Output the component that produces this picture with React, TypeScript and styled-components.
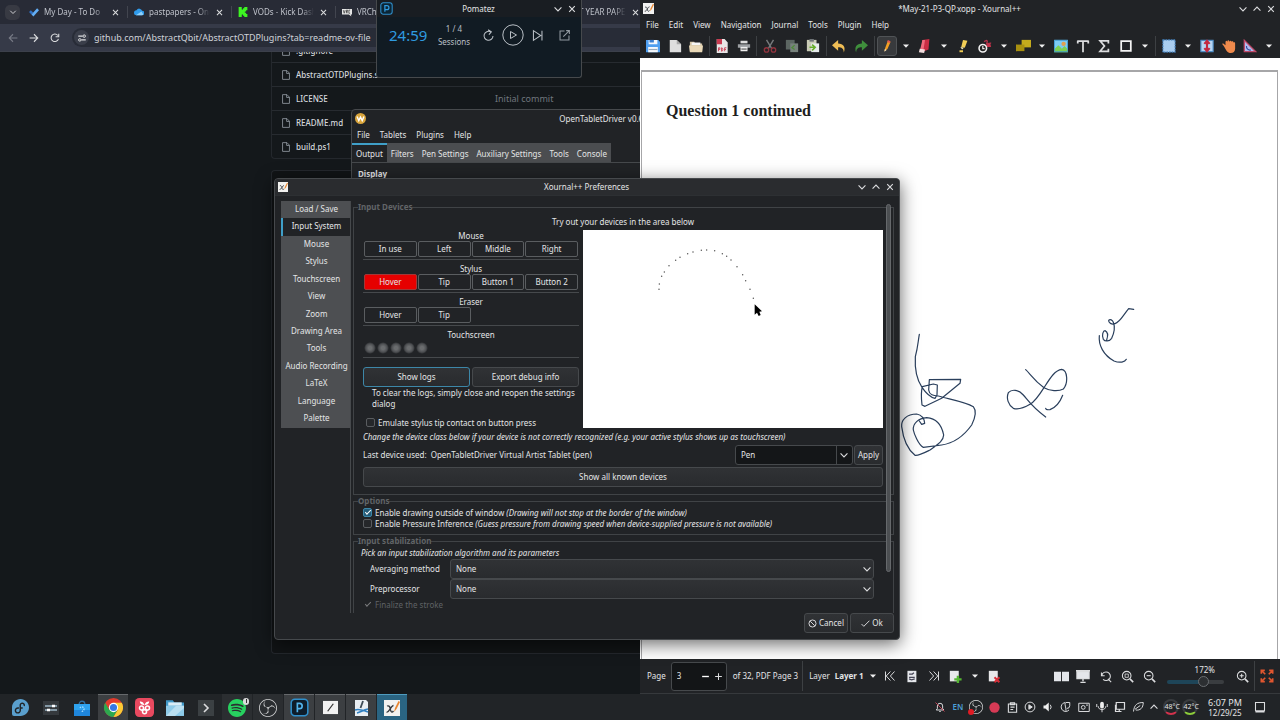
import React from "react";
import styled, { createGlobalStyle, css } from "styled-components";
import { SiFedora, SiSpotify, SiObsstudio } from "react-icons/si";

const Global = createGlobalStyle`
  *, *::before, *::after { box-sizing: border-box; }
  body { margin: 0; background: #14181b; }
  body, button, input, select, textarea {
    font-family: "Noto Sans", "Open Sans", sans-serif;
    font-size: 8px;
    line-height: 12px;
    color: #e4e5e6;
  }
  button { border: 0; padding: 0; margin: 0; background: none; }
  svg { display: block; flex: none; }
`;

/* ---------- shell ---------- */

const Desktop = styled.div`
  position: relative;
  display: flex;
  flex-direction: column;
  min-height: 100vh;
  overflow: hidden;
`;

const Workspace = styled.main`
  flex: 1;
  display: grid;
  grid-template-columns: minmax(0, 1fr) minmax(0, 1fr);
`;

const LeftHalf = styled.div`
  position: relative;
  display: flex;
  overflow: hidden;
`;

const Glyph = ({
  s = 14,
  box = 16,
  children,
}: {
  s?: number;
  box?: number;
  children: React.ReactNode;
}) => (
  <svg
    width={s}
    height={s}
    viewBox={`0 0 ${box} ${box}`}
    fill="none"
    stroke="#dcdddf"
    strokeWidth={1.3}
    aria-hidden
  >
    {children}
  </svg>
);

const ChevronDown = ({ s = 10 }: { s?: number }) => (
  <Glyph s={s}>
    <path d="M2.5 5.5 8 11l5.500-5.500" strokeWidth={1.8} />
  </Glyph>
);
const ChevronUp = ({ s = 10 }: { s?: number }) => (
  <Glyph s={s}>
    <path d="M2.5 10.500 8 5l5.5 5.5" strokeWidth={1.8} />
  </Glyph>
);
const Cross = ({ s = 10 }: { s?: number }) => (
  <Glyph s={s}>
    <path d="m3.500 3.500 9 9m0-9-9 9" strokeWidth={1.8} />
  </Glyph>
);
const JournalMark = ({ s = 10 }: { s?: number }) => (
  <Glyph s={s}>
    <path d="M0 0h16v16H0z" fill="#f2f2f0" stroke="none" />
    <path d="M3 6c3-1 3 2 3.500 4s1.500 3 3 1M9.500 5.500C7 5.500 5 13 2.500 12" stroke="#35393d" strokeWidth={1.3} />
    <path d="m10 12 1-4 3.500-7 1.500 1-3.500 7z" fill="#e8852e" stroke="none" />
  </Glyph>
);

/* ---------- browser ---------- */

const Browser = styled.section`
  flex: 1;
  min-width: 0;
  display: flex;
  flex-direction: column;
  background: #14181b;
`;

const TabStrip = styled.div`
  display: flex;
  align-items: center;
  height: 24px;
  padding-left: 5px;
  background: #282b36;
  overflow: hidden;
`;

const TabSearch = styled.button`
  display: grid;
  place-items: center;
  flex: none;
  width: 15px;
  height: 15px;
  margin-right: 3px;
  border-radius: 5px;
  background: #383a43;
`;

const Tab = styled.div`
  display: flex;
  align-items: center;
  flex: none;
  gap: 5px;
  width: 104px;
  height: 12px;
  padding: 0 7px 0 6px;
  color: #bfc2ca;
  & + & { border-left: 1px solid #42454f; }
`;

const TabTitle = styled.span`
  flex: 1;
  overflow: hidden;
  white-space: nowrap;
  mask-image: linear-gradient(90deg, #000 80%, transparent);
`;

const AddressBar = styled.div`
  display: flex;
  align-items: center;
  gap: 9px;
  height: 28px;
  padding-left: 7px;
  background: #363a48;
  border-bottom: 1px solid #3c404b;
`;

const NavButton = styled.button`
  display: grid;
  place-items: center;
  width: 12px;
  height: 12px;
`;

const UrlField = styled.label`
  flex: 1;
  display: flex;
  align-items: center;
  gap: 5px;
  height: 19px;
  margin-left: 2px;
  padding-left: 2px;
  border-radius: 10px 0 0 10px;
  background: #282c37;
`;

const SiteInfo = styled.span`
  display: grid;
  place-items: center;
  width: 15px;
  height: 15px;
  border-radius: 8px;
  background: #3a3e4a;
`;

const UrlInput = styled.input`
  flex: 1;
  min-width: 0;
  padding: 0;
  border: 0;
  background: none;
  font-size: 9px;
  color: #cfd2d8;
  outline: none;
`;

const PageBody = styled.div`
  flex: 1;
  display: flex;
  flex-direction: column;
  gap: 11px;
  padding: 0 0 40px 271px;
  overflow: hidden;
`;

/* The listing is scrolled so its first row is mostly out of view. */
const FileTable = styled.table`
  width: 100%;
  margin-top: -14px;
  border: 1px solid #24282d;
  border-width: 0 0 1px 1px;
  border-radius: 0 0 0 4px;
  border-collapse: separate;
  border-spacing: 0;
`;

const FileCell = styled.td<{ $muted?: boolean }>`
  height: 24px;
  padding: 0 0 0 ${(p) => (p.$muted ? 0 : 9)}px;
  width: ${(p) => (p.$muted ? "auto" : "223px")};
  border-top: 1px solid #272b30;
  font-weight: ${(p) => (p.$muted ? 400 : 500)};
  color: ${(p) => (p.$muted ? "#70767d" : "#d3d7db")};
  font-size: ${(p) => (p.$muted ? 9 : 8)}px;
  white-space: nowrap;
`;

const FileName = styled.div`
  display: flex;
  align-items: center;
  gap: 5px;
`;

const ReadmeBox = styled.div`
  flex: 1;
  border: 1px solid #24282d;
  border-right: 0;
  border-radius: 4px 0 0 4px;
  background: #111416;
`;

const FileGlyph = () => (
  <Glyph s={10}>
    <path d="M2.500 1h7l4 4v10h-11zM9 1v4.500h4.500" stroke="#8d949b" strokeWidth={1.4} />
  </Glyph>
);

const FavTodo = () => (
  <Glyph s={10}>
    <path d="m0 8 3-3 4 4-3 3z" fill="#2f6fc4" stroke="none" />
    <path d="m4 12 9-10 3 3L7 15z" fill="#62adf5" stroke="none" />
  </Glyph>
);
const FavCloud = () => (
  <Glyph s={10}>
    <path d="M4 13a4 4 0 0 1 0-8 5 5 0 0 1 9 1 3.500 3.500 0 0 1 0 7z" fill="#2f9bec" stroke="none" />
    <path d="M3 13 12 7l3 5-2 1z" fill="#8fd0fa" stroke="none" />
  </Glyph>
);
const FavKick = () => (
  <Glyph s={10}>
    <path d="M1 0h5v4h2V2h2V0h5v5h-2v2h-2v2h2v2h2v5h-5v-2H8v-2H6v4H1z" fill="#3df522" stroke="none" />
  </Glyph>
);
const FavChat = () => (
  <Glyph s={10}>
    <path d="M0 3h16v9h-2l1 3-4-3H0z" fill="#e6e6e6" stroke="none" />
    <path d="m2 5 1.500 5L5 5m2 5V5h2v2H7l2 3m4-5h-2v5h2" stroke="#333" strokeWidth={1.100} />
  </Glyph>
);

const files = [".gitignore", "AbstractOTDPlugins.sln", "LICENSE", "README.md", "build.ps1"];
const tabs: { title: string; icon: React.ReactNode }[] = [
  { title: "My Day - To Do", icon: <FavTodo /> },
  { title: "pastpapers - OneDrive", icon: <FavCloud /> },
  { title: "VODs - Kick Dashboard", icon: <FavKick /> },
  { title: "VRChat", icon: <FavChat /> },
  { title: "", icon: <FavCloud /> },
  { title: "PAST YEAR PAPERS", icon: <FavCloud /> },
];

const BrowserWindow = () => (
  <Browser>
    <TabStrip>
      <TabSearch aria-label="Search tabs"><ChevronDown s={8} /></TabSearch>
      {tabs.map((t) => (
        <Tab key={t.title}>
          {t.icon}
          <TabTitle>{t.title}</TabTitle>
          <Cross s={9} />
        </Tab>
      ))}
    </TabStrip>
    <AddressBar>
      <NavButton aria-label="Back">
        <Glyph s={10}><path d="M15 8H2m6-6L2 8l6 6" stroke="#777b85" strokeWidth={1.700} /></Glyph>
      </NavButton>
      <NavButton aria-label="Forward">
        <Glyph s={10}><path d="M1 8h13M8 2l6 6-6 6" strokeWidth={1.700} /></Glyph>
      </NavButton>
      <NavButton aria-label="Reload">
        <Glyph s={10}><path d="M13.500 9.500A6 6 0 1 1 12.500 4M14 1v5H9" strokeWidth={1.700} /></Glyph>
      </NavButton>
      <UrlField>
        <SiteInfo>
          <Glyph s={10}>
            <path d="M2 5h7M7 11h7" strokeWidth={1.800} />
            <circle cx="11.500" cy="5" r="2" strokeWidth={1.600} />
            <circle cx="4.500" cy="11" r="2" strokeWidth={1.600} />
          </Glyph>
        </SiteInfo>
        <UrlInput aria-label="Address" defaultValue="github.com/AbstractQbit/AbstractOTDPlugins?tab=readme-ov-file" />
      </UrlField>
    </AddressBar>
    <PageBody>
      <FileTable>
        <tbody>
          {files.map((f) => (
            <tr key={f}>
              <FileCell><FileName><FileGlyph />{f}</FileName></FileCell>
              <FileCell $muted>{f === "LICENSE" ? "Initial commit" : ""}</FileCell>
            </tr>
          ))}
        </tbody>
      </FileTable>
      <ReadmeBox />
    </PageBody>
  </Browser>
);

/* ---------- floating windows ---------- */

const windowFrame = css`
  position: absolute;
  display: flex;
  flex-direction: column;
  border: 1px solid #46494c;
  background: #212326;
`;

const TitleBar = styled.header`
  display: grid;
  grid-template-columns: 1fr auto 1fr;
  align-items: center;
  flex: none;
  height: 17px;
  padding: 0 4px 0 3px;
`;

const WindowControls = styled.div`
  display: flex;
  justify-content: flex-end;
  gap: 4px;
`;

const ControlButton = styled.button`
  display: grid;
  place-items: center;
  width: 10px;
  height: 12px;
`;

const MenuBar = styled.nav<{ $pad: number }>`
  display: flex;
  align-items: center;
  gap: 10px;
  height: 16px;
  padding-left: ${(p) => p.$pad}px;
`;

const TabletWindow = styled.section`
  ${windowFrame}
  left: 351px;
  top: 109px;
  width: 515px;
  height: 480px;
  border-radius: 4px 4px 0 0;
`;

const TabletTabs = styled.div`
  display: flex;
  height: 20px;
  border-bottom: 1px solid #46494c;
`;

const TabletTab = styled.button<{ $active?: boolean }>`
  padding: 0 4px;
  border-top: 2px solid ${(p) => (p.$active ? "#3f9fc8" : "#4b4d50")};
  background: ${(p) => (p.$active ? "#212326" : "#4b4d50")};
`;

const SectionTitle = styled.h2`
  margin: 5px 6px;
  font-size: 8px;
  line-height: 12px;
`;

const TabletDriver = () => (
  <TabletWindow>
    <TitleBar>
      <Glyph s={11}>
        <circle cx="8" cy="8" r="8" fill="#d9a53c" stroke="none" />
        <path d="m3 5 2.500 6L8 6l2.500 5L13 5" stroke="#fff" strokeWidth={2} />
      </Glyph>
      <span>OpenTabletDriver v0.6.6.2</span>
      <span />
    </TitleBar>
    <MenuBar $pad={5}>
      {["File", "Tablets", "Plugins", "Help"].map((m) => <button key={m}>{m}</button>)}
    </MenuBar>
    <TabletTabs>
      {["Output", "Filters", "Pen Settings", "Auxiliary Settings", "Tools", "Console"].map((t, i) => (
        <TabletTab key={t} $active={i === 0}>{t}</TabletTab>
      ))}
    </TabletTabs>
    <SectionTitle>Display</SectionTitle>
  </TabletWindow>
);

const TimerWindow = styled.section`
  ${windowFrame}
  left: 376px;
  top: 0;
  width: 206px;
  height: 78px;
  border-top: 0;
  border-radius: 0 0 3px 3px;
  background: #111b23;
  ${TitleBar} { background: #191d22; }
`;

const TimerRow = styled.div`
  display: flex;
  align-items: center;
  height: 36px;
  padding: 0 10px 0 12px;
`;

const TimeLeft = styled.time`
  width: 48px;
  font-size: 15px;
  line-height: 20px;
  color: #2f9be0;
`;

const Sessions = styled.div`
  width: 34px;
  margin-right: 11px;
  text-align: center;
  line-height: 13px;
  color: #b9bfc5;
`;

const TimerButtons = styled.div`
  flex: 1;
  display: flex;
  align-items: center;
  gap: 7px;
  button:last-child { margin-left: auto; }
`;

const Pomatez = () => (
  <TimerWindow>
    <TitleBar>
      <Glyph s={13}>
        <rect x="1" y="1" width="14" height="14" rx="3" fill="#0b2535" stroke="#2f8fcb" />
        <path d="M6 12V4.500h2.500a2 2 0 0 1 0 5H6" stroke="#2f9be0" strokeWidth={1.500} />
      </Glyph>
      <span>Pomatez</span>
      <WindowControls>
        <ControlButton aria-label="Minimize"><ChevronDown /></ControlButton>
        <ControlButton aria-label="Close"><Cross /></ControlButton>
      </WindowControls>
    </TitleBar>
    <TimerRow>
      <TimeLeft>24:59</TimeLeft>
      <Sessions>1 / 4<br />Sessions</Sessions>
      <TimerButtons>
        <button aria-label="Reset">
          <Glyph s={13}><path d="M13.500 8.500a5.500 5.500 0 1 1-3-5M7.500 1l4 2.500L8.500 7" stroke="#b9bfc5" /></Glyph>
        </button>
        <button aria-label="Start">
          <Glyph s={22} box={22}>
            <circle cx="11" cy="11" r="10.200" stroke="#b9bfc5" strokeWidth={1} />
            <path d="M8.500 7.500v7l6-3.500z" stroke="#b9bfc5" strokeWidth={1} />
          </Glyph>
        </button>
        <button aria-label="Skip">
          <Glyph s={13}><path d="M3 2v12l9-6zM13.500 2v12" stroke="#b9bfc5" /></Glyph>
        </button>
        <button aria-label="Compact mode">
          <Glyph s={13}><path d="M8 2.500H2.500v11h11V8M6.500 9.500 14 2m-4 0h4v4" stroke="#929aa1" /></Glyph>
        </button>
      </TimerButtons>
    </TimerRow>
  </TimerWindow>
);

/* ---------- Xournal++ main window ---------- */

const Journal = styled.section`
  display: flex;
  flex-direction: column;
  min-width: 0;
  background: #212326;
`;

const Divider = styled.span<{ $h?: number }>`
  flex: none;
  width: 1px;
  height: ${(p) => p.$h ?? 20}px;
  margin: 0 1px;
  background: #3d4043;
`;

const ToolBar = styled.div`
  display: flex;
  align-items: center;
  justify-content: space-between;
  height: 25px;
  padding: 0 3px;
`;

const Tool = styled.button<{ $on?: boolean }>`
  display: grid;
  place-items: center;
  width: 20px;
  height: 20px;
  border-radius: 3px;
  border: 1px solid ${(p) => (p.$on ? "#505356" : "transparent")};
  background: ${(p) => (p.$on ? "#383a3d" : "none")};
`;

const CaretButton = styled.button<{ $w?: number }>`
  display: grid;
  place-items: center;
  width: ${(p) => p.$w ?? 15}px;
  height: 20px;
`;

const Caret = () => (
  <Glyph s={6} box={6}><path d="M0 1.500h6L3 4.800z" fill="#f0f0f0" stroke="none" /></Glyph>
);

const toolIcons: Record<string, React.ReactNode> = {
  Save: <Glyph><path d="M0 1h14l2 2v12H0z" fill="#4f9ff0" stroke="none" /><path d="M3 1h10v5H3zM2.500 9h11v6h-11z" fill="#f4f8fc" stroke="none" /><path d="M4 1v3h5V1z" fill="#3b7fd0" stroke="none" /><path d="M3 12h10" stroke="#9ab" /></Glyph>,
  New: <Glyph><path d="M2 1h8l5 5v9H2z" fill="#dedede" stroke="none" /><path d="M10 1v5h5z" fill="#a8a8a8" stroke="none" /></Glyph>,
  Open: <Glyph><path d="M1 3h5l1 2h8v9H1z" fill="#d5c4a4" stroke="none" /><path d="M3 4h10v3H3z" fill="#f5f5f5" stroke="none" /><path d="M0 7.500h16L15 15H1z" fill="#ead9b8" stroke="none" /></Glyph>,
  "Export PDF": <Glyph><path d="M2 0h9l3.500 4v12H2z" fill="#e9e6e6" stroke="none" /><path d="M2 0h6v6H2z" fill="#c93a50" stroke="none" /><path d="M4 14v-4h1.500v2H4m3.500-2v4c2 0 2-4 0-4m3.500 4v-4h2m-2 2h1.500" stroke="#c93a50" strokeWidth={1} /></Glyph>,
  Print: <Glyph><path d="M4 2h8v3H4z" fill="#ddd" stroke="none" /><path d="M1 6h14v4H1z" fill="#9da0a3" stroke="none" /><path d="M4 9h8v5H4z" fill="#f0f0f0" stroke="none" /><path d="M5 11.500h6" stroke="#555" /></Glyph>,
  Cut: <Glyph><path d="m4 1 6 10M12 1 6 11" stroke="#777a7d" strokeWidth={1.600} /><circle cx="4" cy="12.500" r="2.500" stroke="#92333e" strokeWidth={1.500} /><circle cx="12" cy="12.500" r="2.500" stroke="#92333e" strokeWidth={1.500} /></Glyph>,
  Copy: <Glyph><path d="M1 1h10v11H1z" fill="#5c6662" stroke="none" /><path d="M6 5h9v10H6z" fill="#77827c" stroke="none" /><path d="m11 7-3 3 3 2" stroke="#4f8a3a" strokeWidth={1.600} /></Glyph>,
  Paste: <Glyph><path d="M1 1h11v13H1z" fill="#c9cbb6" stroke="none" /><path d="M4 0h5v3H4z" fill="#6f7478" stroke="none" /><path d="M6 5h9v10H6z" fill="#e7ecec" stroke="none" /><path d="M4 9.500h5m-2-3 3.500 3L7 13" stroke="#67ad2c" strokeWidth={1.800} /></Glyph>,
  Undo: <Glyph><path d="M7 1v4c6 0 9 4 6.500 10.500C13.500 11 11 9.500 7 9.500v4L0 7z" fill="#efbd55" stroke="none" /></Glyph>,
  Redo: <Glyph><path d="M9 1v4C3 5 0 9 2.500 15.500 2.500 11 5 9.500 9 9.500v4L16 7z" fill="#3f8f3c" stroke="none" /></Glyph>,
  Pen: <Glyph><path d="m5 14 1-4 3-8 3 1.500-3.500 8z" fill="#f4a024" stroke="none" /><path d="m9 1 3 1.500-.8 2.200-3-1.400z" fill="#e2574c" stroke="none" /><path d="m5 14.500.5-3 2 1z" fill="#f5e3c0" stroke="none" /></Glyph>,
  Eraser: <Glyph><path d="m5 1 8-1-1 12-8 3z" fill="#c92d44" stroke="none" /><path d="m5 1 3 0-2 13-4 0z" fill="#ef6a7c" stroke="none" /><path d="m2 11 6 1-1 4-6-1z" fill="#f4dfe0" stroke="none" /></Glyph>,
  Highlighter: <Glyph><path d="m8 1 5 1-3 8-4-1z" fill="#f3cf56" stroke="none" /><path d="m5 9 4 1-2 2z" fill="#fff3c2" stroke="none" /><path d="M4 14h4" stroke="#f3cf56" strokeWidth={2.200} /></Glyph>,
  "Select region": <Glyph><path d="M7 3c4-3 4 0 3 2s3-1 5 0" stroke="#b4334a" strokeWidth={1.500} /><path d="m9 9 6 0-1-4-4 1z" fill="#c2324a" stroke="none" /><circle cx="5.500" cy="10.500" r="4.300" fill="#222" stroke="#f2f2f2" strokeWidth={1.800} /><path d="M5.500 8v3h2" stroke="#f2f2f2" /></Glyph>,
  Shapes: <Glyph s={15}><path d="M6 2h10v8H6z" fill="#c4ab1d" stroke="none" /><path d="M0 7h9v7H0z" fill="#a89010" stroke="none" /></Glyph>,
  Image: <Glyph><path d="M0 1h16v14H0z" fill="#7ecbf2" stroke="none" /><path d="m0 12 5-5 4 4 3-3 4 4v3H0z" fill="#7ed052" stroke="none" /><circle cx="11" cy="5.500" r="2.500" fill="#e0a050" stroke="none" /><path d="M.5 1.500h15v13H.5z" stroke="#3b97cf" strokeWidth={1} /></Glyph>,
  Text: <Glyph><path d="M1.500 2.500h13M8 2.500V15M2 2v3m12-3v3" strokeWidth={2} /></Glyph>,
  Math: <Glyph><path d="M13 5V2H3.500l5 6-5 6H13v-3" strokeWidth={2} /></Glyph>,
  Rectangle: <Glyph><path d="M2.500 2.500h11v11h-11z" strokeWidth={2} stroke="#f4f4f4" /></Glyph>,
  "Select rectangle": <Glyph><path d="M1 1h14v14H1z" fill="#a9cdf0" stroke="#3f7db8" strokeDasharray="2 1" /></Glyph>,
  "Vertical space": <Glyph><path d="M1 1.500h14v13H1z" fill="#b6d5f3" stroke="#4f8cc4" /><path d="M8 2v12M5 5.500 8 2l3 3.500M5 10.500 8 14l3-3.500" stroke="#c32941" strokeWidth={2.400} /></Glyph>,
  Hand: <Glyph><path d="M2 8 0 5.500 1.500 5 4 7V3c.5-1.500 1.500-1.500 2 0 .5-2 2-2 2.500 0C9 1.500 10.500 1.500 11 3c1-1 2-.5 2 1 1.500-.5 2 0 2 1.500V11c0 3-2 5-5 5-4 0-5-3-8-8z" fill="#ef8a4c" stroke="none" /></Glyph>,
  "Set square": <Glyph><path d="M1.500 1.500v13h13z" fill="#aebdf0" stroke="#c04a68" strokeWidth={1.500} /><path d="M4 8a4 4 0 0 0 5 4.500" stroke="#364a9a" /></Glyph>,
};

const toolLayout = [
  "Save", "New", "Open", "|", "Export PDF", "Print", "|", "Cut", "Copy", "Paste", "|", "Undo", "Redo", "|",
  "Pen", "v", "Eraser", "v", "Highlighter", "Select region", "v", "Shapes", "v", "Image", "Text", "Math",
  "Rectangle", "v", "|", "Select rectangle", "v", "Vertical space", "Hand", "Set square", "v",
];

const Canvas = styled.div`
  flex: 1;
  display: flex;
  flex-direction: column;
  background: #fff;
`;

const PageGap = styled.div`
  height: 12px;
  background: #fff;
`;

const Sheet = styled.article`
  position: relative;
  flex: 1;
  margin: 0 2px 0 1px;
  padding: 29px 24px;
  border: solid #a6a6a8;
  border-width: 2px 1px 0 1px;
  background: #fff;
`;

const Heading = styled.h1`
  margin: 0;
  font-family: "Liberation Serif", "Times New Roman", serif;
  font-size: 16px;
  line-height: 20px;
  color: #1e1e20;
`;

const Ink = styled.svg`
  position: absolute;
  left: 248px;
  top: 218px;
`;

const StatusBar = styled.footer`
  display: flex;
  align-items: center;
  height: 35px;
  padding: 0 2px 0 7px;
  border-bottom: 1px solid #36393c;
`;

const PageSpin = styled.div`
  display: flex;
  align-items: center;
  width: 56px;
  height: 29px;
  margin: 0 6px 0 5px;
  padding: 0 1px 0 5px;
  border: 1px solid #46494c;
  border-radius: 3px;
  background: #131517;
`;

const SpinInput = styled.input`
  flex: 1;
  min-width: 0;
  padding: 0;
  border: 0;
  background: none;
`;

const SpinButton = styled.button`
  display: grid;
  place-items: center;
  width: 13px;
  height: 20px;
`;

const LayerButton = styled.button`
  display: flex;
  align-items: center;
  gap: 6px;
  margin: 0 3px 0 5px;
  font-weight: 700;
`;

const StatusButton = styled.button`
  display: grid;
  place-items: center;
  flex: none;
  width: 22px;
  height: 22px;
`;

const StatusLabel = styled.label`
  white-space: nowrap;
`;

const PageCount = styled.span`
  margin-right: 3px;
  white-space: nowrap;
`;

const LayerLabel = styled.span`
  margin-left: 5px;
`;

const Filler = styled.span`
  flex: 1;
`;

const ZoomControl = styled.label`
  display: flex;
  flex-direction: column;
  width: 71px;
  padding: 0 7px;
  text-align: right;
  span { padding-right: 9px; }
`;

const ZoomRange = styled.input`
  width: 57px;
  height: 13px;
  margin: 0;
  appearance: none;
  background: none;
  &::-webkit-slider-runnable-track {
    height: 4px;
    border-radius: 2px;
    background: linear-gradient(90deg, #1e4558 60%, #3a3d40 60%);
  }
  &::-webkit-slider-thumb {
    appearance: none;
    width: 11px;
    height: 11px;
    margin-top: -4px;
    border: 1px solid #6a6e72;
    border-radius: 50%;
    background: #2c2f32;
  }
`;

const Lens = ({ children }: { children?: React.ReactNode }) => (
  <Glyph s={13}><circle cx="7" cy="7" r="5.300" /><path d="m11 11 4 4" strokeWidth={2} />{children}</Glyph>
);

const JournalWindow = () => (
  <Journal>
    <TitleBar>
      <JournalMark s={11} />
      <span>*May-21-P3-QP.xopp - Xournal++</span>
      <WindowControls>
        <ControlButton aria-label="Minimize"><ChevronDown /></ControlButton>
        <ControlButton aria-label="Maximize"><ChevronUp /></ControlButton>
        <ControlButton aria-label="Close"><Cross /></ControlButton>
      </WindowControls>
    </TitleBar>
    <MenuBar $pad={6}>
      {["File", "Edit", "View", "Navigation", "Journal", "Tools", "Plugin", "Help"].map((m) => (
        <button key={m}>{m}</button>
      ))}
    </MenuBar>
    <ToolBar>
      {toolLayout.map((t, i) =>
        t === "|" ? <Divider key={i} /> :
        t === "v" ? <CaretButton key={i} aria-label="More"><Caret /></CaretButton> :
        <Tool key={i} aria-label={t} $on={t === "Pen"}>{toolIcons[t]}</Tool>
      )}
    </ToolBar>
    <Canvas>
      <PageGap />
      <Sheet>
        <Heading>Question 1 continued</Heading>
        <Ink width="270" height="180" viewBox="0 0 810 540" fill="none" stroke="#2a3f5c" strokeWidth="3.600" strokeLinecap="round" strokeLinejoin="round">
          <path d="M88 133C84 155 84 170 76 200c-2 35 2 65 20 92 15 22 26 30 39 33l6-10 1-30-12-3-33 8c-4 15-4 30-1 55l9 4 50-24 55-45 2-12-94 1-2 31c2 15 14 17 29 18 35 10 80 17 105 32 12 15 5 35-5 55-25 35-55 55-90 60l-55 7c-15-7-28-42-30-52-2-20 15-35 40-37 30 2 45 22 51 52-1 20-21 30-41 45-20 10-35 18-45 16-20-16-35-46-40-86-2-20 15-38 45-38 15 3 23 13 24 28l-9 3-7-10" />
          <path d="M407 239c13 11 23 31 55 54 18 10 43 12 58 4 15-17 13-57-5-59-20 2-35 27-53 55-17 27-27 42-42 50-20 12-35 17-50 12-15-10-22-30-15-47 10-11 30-10 45 7 15 17 25 35 67 66" />
          <path d="M467 355q1 5 13 4 25-9 38-43" />
          <path d="m731 58-15-2c-16 19-26 41-41 45-10 4-20-3-19-10 4-5 12-1 14 6 5 13 2 33-5 48-7 10-20 10-25 3-6-13 0-26 5-26 7 3 10 13 5 28" />
          <path d="M628 137c-3 28 12 58 44 76 18 7 33 3 37-5" />
        </Ink>
      </Sheet>
    </Canvas>
    <StatusBar>
      <StatusLabel htmlFor="page-no">Page</StatusLabel>
      <PageSpin>
        <SpinInput id="page-no" defaultValue="3" />
        <SpinButton aria-label="Previous page"><Glyph s={9}><path d="M2 8h12" strokeWidth={2.400} stroke="#fff" /></Glyph></SpinButton>
        <SpinButton aria-label="Next page"><Glyph s={9}><path d="M2 8h12M8 2v12" strokeWidth={1.800} /></Glyph></SpinButton>
      </PageSpin>
      <PageCount>of 32, PDF Page 3</PageCount>
      <Divider $h={30} />
      <LayerLabel>Layer</LayerLabel>
      <LayerButton>Layer 1 <Caret /></LayerButton>
      <StatusButton aria-label="First page"><Glyph s={12}><path d="M2 2v12M8.500 2l-5.500 6 5.500 6M14 2 8.500 8l5.500 6" /></Glyph></StatusButton>
      <StatusButton aria-label="Go to page"><Glyph s={13}><path d="M3 1h11v14H3z" fill="#e4e6ea" stroke="none" /><path d="M5 5h4l2-1.500M5 9h7M5 11l3 1 4-1" stroke="#445" strokeWidth={1.500} /></Glyph></StatusButton>
      <StatusButton aria-label="Last page"><Glyph s={12}><path d="M14 2v12M7.500 2l5.500 6-5.500 6M2 2l5.500 6L2 14" /></Glyph></StatusButton>
      <StatusButton aria-label="Add page"><Glyph s={13}><path d="M1 1h11v13H1z" fill="#e8e8ea" stroke="none" /><path d="M11 7v9M6.500 11.500h9" stroke="#55b533" strokeWidth={3} /></Glyph></StatusButton>
      <CaretButton $w={17} aria-label="Page templates"><Caret /></CaretButton>
      <StatusButton aria-label="Delete page"><Glyph s={13}><path d="M1 1h11v13H1z" fill="#e8e8ea" stroke="none" /><path d="m8 9 6 6m0-6-6 6" stroke="#d62c36" strokeWidth={2.400} /></Glyph></StatusButton>
      <Filler />
      <StatusButton aria-label="Paired pages"><Glyph s={15}><path d="M0 3h7.500v10H0zM8.500 3H16v10H8.500z" fill="#e4e6ea" stroke="none" /></Glyph></StatusButton>
      <StatusButton aria-label="Presentation"><Glyph s={14}><path d="M1 3h14v8H1z" fill="#e4e6ea" /><path d="M0 2h16M8 11v3m-3 1.500h6" strokeWidth={1.600} /></Glyph></StatusButton>
      <StatusButton aria-label="Zoom 100%"><Glyph s={13}><path d="M3 3v4h4M3.500 6.500A5.300 5.300 0 1 1 5 11.500M11 11l4 4" /></Glyph></StatusButton>
      <StatusButton aria-label="Zoom fit"><Lens><path d="M5 5h4v4H5z" strokeWidth={1} /></Lens></StatusButton>
      <StatusButton aria-label="Zoom out"><Lens><path d="M4.500 7h5" /></Lens></StatusButton>
      <ZoomControl>
        <span>172%</span>
        <ZoomRange type="range" min={0} max={100} defaultValue={67} />
      </ZoomControl>
      <StatusButton aria-label="Zoom in"><Lens><path d="M4.500 7h5M7 4.500v5" /></Lens></StatusButton>
      <Divider $h={30} />
      <StatusButton aria-label="Fullscreen"><Glyph s={14}><path d="M1.500 5.500v-4h4m5 0h4v4m0 5v4h-4m-5 0h-4v-4M2 2l4 4m8-4-4 4M2 14l4-4m8 4-4-4" stroke="#e0562f" strokeWidth={1.900} /></Glyph></StatusButton>
    </StatusBar>
  </Journal>
);

/* ---------- preferences dialog ---------- */

const Dialog = styled.section`
  ${windowFrame}
  left: calc(50% - 366px);
  top: 178px;
  width: 626px;
  border-radius: 4px;
  box-shadow: 0 4px 18px rgba(0, 0, 0, 0.6);
  ${TitleBar} {
    border-bottom: 1px solid #2d3033;
    border-radius: 4px 4px 0 0;
    background: #2a2c2f;
  }
`;

const DialogBody = styled.div`
  display: flex;
  height: 417px;
  padding: 5px 5px 0 6px;
`;

const SideColumn = styled.div`
  width: 70px;
  margin-right: 2px;
  border-right: 1px solid #46494c;
`;

const SideNav = styled.nav`
  display: flex;
  flex-direction: column;
  height: 227px;
`;

const SideItem = styled.button<{ $active?: boolean }>`
  flex: 1;
  padding-bottom: 2px;
  border-left: 2px solid ${(p) => (p.$active ? "#3f9fc8" : "#4d4f52")};
  background: ${(p) => (p.$active ? "#212326" : "#4d4f52")};
`;

const Scroller = styled.div`
  position: relative;
  flex: 1;
  min-width: 0;
  overflow: hidden;
`;

const ScrollThumb = styled.div`
  position: absolute;
  top: 3px;
  right: 3px;
  width: 5px;
  height: 368px;
  border: 1px solid #66696c;
  border-radius: 3px;
  background: #4c4f52;
`;

const Group = styled.fieldset<{ $pb: number }>`
  min-width: 0;
  margin: 0;
  padding: 0 10px ${(p) => p.$pb}px 9px;
  border: 1px solid #404346;
`;

const Legend = styled.legend`
  margin-left: -5px;
  padding: 0;
  font-weight: 700;
  line-height: 12px;
  color: #626568;
`;

const Centered = styled.p`
  margin: 0;
  padding: 3px 0 2px;
  text-align: center;
`;

const Tester = styled.div`
  display: grid;
  grid-template-columns: 216px 1fr;
  gap: 4px;
`;

const Probe = styled.div`
  display: flex;
  flex-direction: column;
`;

const DeviceGroup = styled.div`
  padding: 0 1px 2px;
  margin-bottom: 3px;
  border-bottom: 1px solid #46494c;
`;

const DeviceLabel = styled.div`
  line-height: 11px;
  text-align: center;
`;

const DeviceStates = styled.div`
  display: grid;
  grid-template-columns: repeat(4, 1fr);
  gap: 1px;
`;

const DeviceState = styled.span<{ $hot?: boolean }>`
  height: 16px;
  border: 1px solid ${(p) => (p.$hot ? "#a13838" : "#5a5d60")};
  border-radius: 2px;
  background: ${(p) => (p.$hot ? "#e60000" : "#212326")};
  line-height: 14px;
  text-align: center;
`;

const TouchDots = styled.div`
  display: flex;
  align-items: center;
  gap: 1px;
  height: 15px;
`;

const TouchDot = styled.span`
  width: 12px;
  height: 12px;
  border-radius: 50%;
  background: radial-gradient(circle, #6a6c6e 20%, #4c4e51 50%, transparent 70%);
`;

const PushButton = styled.button<{ $focus?: boolean }>`
  display: flex;
  align-items: center;
  justify-content: center;
  gap: 2px;
  height: 20px;
  border: 1px solid ${(p) => (p.$focus ? "#3d87a8" : "#46494c")};
  border-radius: 3px;
  background: linear-gradient(#303235, #292b2e);
`;

const ApplyButton = styled(PushButton)`
  width: 29px;
`;

const WideButton = styled(PushButton)`
  width: 100%;
`;

const TwoButtons = styled.div`
  display: grid;
  grid-template-columns: 1fr 1fr;
  gap: 2px;
  margin-top: 6px;
`;

const Hint = styled.p`
  margin: 0;
  padding: 0 0 8px 9px;
  line-height: 11px;
`;

const CheckLabel = styled.label<{ $inset?: boolean; $off?: boolean }>`
  display: flex;
  align-items: center;
  gap: 3px;
  line-height: 11px;
  padding-left: ${(p) => (p.$inset ? 3 : 0)}px;
  color: ${(p) => (p.$off ? "#5f6265" : "inherit")};
`;

const CheckInput = styled.input`
  appearance: none;
  display: grid;
  place-items: center;
  width: 9px;
  height: 9px;
  margin: 0;
  border: 1px solid #5a5d60;
  border-radius: 2px;
  background: #25272a;
  &:checked { border-color: #3d87a8; background: #235b78; }
  &:disabled { border-color: transparent; background: none; opacity: 0.4; }
  &:checked::after {
    content: "";
    width: 6px;
    height: 3px;
    border: solid #fff;
    border-width: 0 0 1px 1px;
    transform: translateY(-1px) rotate(-45deg);
  }
`;

const TestArea = styled.div`
  background: #fff;
  overflow: hidden;
`;

const Note = styled.p<{ $outdent?: boolean; $spaced?: boolean }>`
  margin: 0 0 0 ${(p) => (p.$outdent ? -2 : 0)}px;
  padding-top: ${(p) => (p.$spaced ? 3 : 0)}px;
  font-style: italic;
`;

const DeviceRow = styled.div`
  display: flex;
  align-items: center;
  gap: 1px;
  margin: 2px 0;
`;

const DeviceName = styled.output`
  margin-left: 3px;
`;

const SelectBox = styled.span<{ $dark?: boolean; $w?: number }>`
  position: relative;
  display: flex;
  align-items: center;
  justify-content: flex-end;
  flex: ${(p) => (p.$w ? "none" : "1")};
  width: ${(p) => (p.$w ? `${p.$w}px` : "auto")};
  height: 20px;
  padding-right: 1px;
  border: 1px solid #46494c;
  border-radius: 3px;
  background: ${(p) => (p.$dark ? "#141618" : "linear-gradient(#303235, #292b2e)")};
  svg { pointer-events: none; }
`;

const Select = styled.select`
  position: absolute;
  inset: 0;
  width: 100%;
  padding: 0 5px;
  border: 0;
  appearance: none;
  background: none;
`;

const ArrowSplit = styled.span`
  display: grid;
  place-items: center;
  width: 15px;
  height: 18px;
  border-left: 1px solid #46494c;
`;

const FormRow = styled.div`
  display: flex;
  align-items: center;
  height: 20px;
  padding-right: 9px;
  label { width: 87px; padding-left: 7px; }
`;

const DialogFooter = styled.footer`
  display: flex;
  justify-content: flex-end;
  gap: 2px;
  padding: 0 5px 6px;
  ${PushButton} { width: 44px; }
`;

const trail = [
  [238, 343], [239, 327], [246, 304], [254, 291], [268, 272], [288, 256], [301, 247], [324, 236], [340, 231],
  [365, 226], [381, 225], [405, 227], [428, 236], [441, 244], [454, 255], [472, 275], [489, 299], [498, 317],
  [511, 343], [521, 370],
];

const pages = [
  "Load / Save", "Input System", "Mouse", "Stylus", "Touchscreen", "View", "Zoom", "Drawing Area", "Tools",
  "Audio Recording", "LaTeX", "Language", "Palette",
];

const devices: { name: string; states: string[]; hot?: string }[] = [
  { name: "Mouse", states: ["In use", "Left", "Middle", "Right"] },
  { name: "Stylus", states: ["Hover", "Tip", "Button 1", "Button 2"], hot: "Hover" },
  { name: "Eraser", states: ["Hover", "Tip"] },
];

const Preferences = () => (
  <Dialog role="dialog" aria-label="Xournal++ Preferences">
    <TitleBar>
      <JournalMark />
      <span>Xournal++ Preferences</span>
      <WindowControls>
        <ControlButton aria-label="Minimize"><ChevronDown /></ControlButton>
        <ControlButton aria-label="Maximize"><ChevronUp /></ControlButton>
        <ControlButton aria-label="Close"><Cross /></ControlButton>
      </WindowControls>
    </TitleBar>
    <DialogBody>
      <SideColumn>
        <SideNav>
          {pages.map((p) => <SideItem key={p} $active={p === "Input System"}>{p}</SideItem>)}
        </SideNav>
      </SideColumn>
      <Scroller>
        <Group $pb={7}>
          <Legend>Input Devices</Legend>
          <Centered>Try out your devices in the area below</Centered>
          <Tester>
            <Probe>
              {devices.map((d) => (
                <DeviceGroup key={d.name}>
                  <DeviceLabel>{d.name}</DeviceLabel>
                  <DeviceStates>
                    {d.states.map((s) => <DeviceState key={s} $hot={s === d.hot}>{s}</DeviceState>)}
                  </DeviceStates>
                </DeviceGroup>
              ))}
              <DeviceGroup>
                <DeviceLabel>Touchscreen</DeviceLabel>
                <TouchDots>{[0, 1, 2, 3, 4].map((n) => <TouchDot key={n} />)}</TouchDots>
              </DeviceGroup>
              <TwoButtons>
                <PushButton $focus>Show logs</PushButton>
                <PushButton>Export debug info</PushButton>
              </TwoButtons>
              <Hint>To clear the logs, simply close and reopen the settings dialog</Hint>
              <CheckLabel $inset><CheckInput type="checkbox" />Emulate stylus tip contact on button press</CheckLabel>
            </Probe>
            <TestArea>
              <svg width="299" height="198" viewBox="10 165 897 594" aria-hidden>
                {trail.map(([x, y]) => <circle key={`${x}-${y}`} cx={x} cy={y} r="2.200" fill="#555" />)}
                <path d="M525 388v31l7-6 5 10 6-3-4-10 8-1z" fill="#000" />
              </svg>
            </TestArea>
          </Tester>
          <Note $spaced>Change the device class below if your device is not correctly recognized (e.g. your active stylus shows up as touchscreen)</Note>
          <DeviceRow>
            <label htmlFor="device-class">Last device used:</label>
            <DeviceName>OpenTabletDriver Virtual Artist Tablet (pen)</DeviceName>
            <Filler />
            <SelectBox $dark $w={118}>
              <Select id="device-class" defaultValue="Pen"><option>Pen</option></Select>
              <ArrowSplit><ChevronDown /></ArrowSplit>
            </SelectBox>
            <ApplyButton>Apply</ApplyButton>
          </DeviceRow>
          <WideButton>Show all known devices</WideButton>
        </Group>
        <Group $pb={5}>
          <Legend>Options</Legend>
          <CheckLabel>
            <CheckInput type="checkbox" defaultChecked />
            <span>Enable drawing outside of window <i>(Drawing will not stop at the border of the window)</i></span>
          </CheckLabel>
          <CheckLabel>
            <CheckInput type="checkbox" />
            <span>Enable Pressure Inference <i>(Guess pressure from drawing speed when device-supplied pressure is not available)</i></span>
          </CheckLabel>
        </Group>
        <Group $pb={40}>
          <Legend>Input stabilization</Legend>
          <Note $outdent>Pick an input stabilization algorithm and its parameters</Note>
          <FormRow>
            <label htmlFor="averaging">Averaging method</label>
            <SelectBox><Select id="averaging"><option>None</option></Select><ChevronDown /></SelectBox>
          </FormRow>
          <FormRow>
            <label htmlFor="preprocessor">Preprocessor</label>
            <SelectBox><Select id="preprocessor"><option>None</option></Select><ChevronDown /></SelectBox>
          </FormRow>
          <CheckLabel $off><CheckInput type="checkbox" defaultChecked disabled />Finalize the stroke</CheckLabel>
        </Group>
        <ScrollThumb />
      </Scroller>
    </DialogBody>
    <DialogFooter>
      <PushButton>
        <Glyph s={9}><circle cx="8" cy="8" r="6.300" strokeWidth={1.700} /><path d="m4 4 8 8" strokeWidth={1.700} /></Glyph>Cancel
      </PushButton>
      <PushButton>
        <Glyph s={9}><path d="m1 9 4 4 10-10" strokeWidth={1.700} /></Glyph>Ok
      </PushButton>
    </DialogFooter>
  </Dialog>
);

/* ---------- desktop panel ---------- */

const Panel = styled.footer`
  display: flex;
  align-items: stretch;
  height: 26px;
  padding: 0 11px 0 5px;
  background: #212427;
`;

const Task = styled.button<{ $state?: "open" | "current" | "idle" }>`
  position: relative;
  display: grid;
  place-items: center;
  width: 30px;
  margin-right: 1px;
  border-top: 1px solid
    ${(p) => (p.$state === "current" ? "#4f9cc0" : p.$state === "open" ? "#66696c" : "transparent")};
  background: ${(p) =>
    p.$state === "current" ? "#2a6482" : p.$state === "open" ? "#3c3f42" : p.$state === "idle" ? "#2b2e31" : "none"};
`;

const Alert = styled.span`
  position: absolute;
  top: 3px;
  right: 3px;
  width: 6px;
  height: 7px;
  border-radius: 3px;
  background: #d9dadb;
  &::after {
    content: "";
    display: block;
    width: 1px;
    height: 4px;
    margin: 1px auto 0;
    background: #333;
  }
`;

const TrayButton = styled.button<{ $w?: number }>`
  position: relative;
  display: grid;
  place-items: center;
  width: ${(p) => p.$w ?? 18}px;
`;

const RecordDot = styled.span`
  position: absolute;
  left: 1px;
  bottom: 5px;
  width: 6px;
  height: 6px;
  border-radius: 50%;
  background: #e01b24;
`;

const Lang = styled.span`
  font-weight: 600;
  color: #4c9fd6;
`;

const Dial = styled.span<{ $c: string }>`
  display: grid;
  place-items: center;
  width: 16px;
  height: 16px;
  border: 2px solid #3a3d40;
  border-bottom-color: ${(p) => p.$c};
  border-radius: 50%;
  font-size: 7px;
  line-height: 8px;
  white-space: nowrap;
`;

const Clock = styled.time`
  display: flex;
  flex-direction: column;
  justify-content: center;
  width: 52px;
  text-align: center;
  line-height: 9px;
`;

const Hour = styled.span`
  font-size: 9px;
  line-height: 10px;
`;

const apps: { name: string; state?: "open" | "current" | "idle"; icon: React.ReactNode }[] = [
  { name: "Fedora", icon: <SiFedora size={17} color="#5a9fcd" /> },
  { name: "Settings", icon: <Glyph s={16}><path d="M0 1h16v14H0z" fill="#35393d" stroke="none" /><path d="M2 6h12M2 10h12" stroke="#9fb8c8" /><path d="M9 6h3M4 10h3" stroke="#fff" strokeWidth={2.400} /></Glyph> },
  { name: "Discover", icon: <Glyph s={16}><path d="M5 5c0-5 6-5 6 0" stroke="#2f6f9f" /><path d="M0 4h16v12H0z" fill="#2ea3ee" stroke="none" /><path d="M0 10h16v6H0z" fill="#1f86dc" stroke="none" /><path d="M6 8c1-2 4-1 4 1s-2 2-2 3" stroke="#a8e0ff" strokeDasharray="1.500 1" /></Glyph> },
  { name: "Chrome", state: "open", icon: (
    <Glyph s={19}>
      <circle cx="8" cy="8" r="8" fill="#e33b2e" stroke="none" />
      <path d="M1.070 4A8 8 0 0 0 8 16l3.500-6L8 8 4.500 10z" fill="#2da94f" stroke="none" />
      <path d="M14.930 4A8 8 0 0 1 8 16l3.500-6L8 4z" fill="#fcc934" stroke="none" />
      <circle cx="8" cy="8" r="3.900" fill="#fff" stroke="none" /><circle cx="8" cy="8" r="3" fill="#3578e5" stroke="none" />
    </Glyph>) },
  { name: "Raspberry", icon: <Glyph s={19}><rect width="16" height="16" rx="3.500" fill="#e8495f" stroke="none" /><path d="M8 6c-1-3-3-3-4-3 0 2 2 3 4 3 2 0 4-1 4-3-1 0-3 0-4 3z" fill="#fff" stroke="none" /><circle cx="5.500" cy="8.500" r="1.700" stroke="#fff" /><circle cx="10.500" cy="8.500" r="1.700" stroke="#fff" /><circle cx="8" cy="11.500" r="1.700" stroke="#fff" /></Glyph> },
  { name: "Files", icon: <Glyph s={18}><path d="M0 1h6l1.500 2H16v12H0z" fill="#3f98c8" stroke="none" /><path d="M2 3h12v3H2z" fill="#d9ecf6" stroke="none" /><path d="M0 6h16v9H0z" fill="#8ecbe9" stroke="none" /><path d="m0 15 9-9h7v2l-8 7z" fill="#b9dff1" stroke="none" /></Glyph> },
  { name: "Terminal", icon: <Glyph s={16}><path d="M0 0h16v16H0z" fill="#3b4043" stroke="none" /><path d="m6 4 4 4-4 4" strokeWidth={1.600} /></Glyph> },
  { name: "Spotify", state: "idle", icon: <><SiSpotify size={18} color="#27d15f" /><Alert /></> },
  { name: "OBS Studio", state: "idle", icon: <SiObsstudio size={18} color="#d4d5d6" /> },
  { name: "Pomatez", state: "open", icon: <Glyph s={19}><rect x="1" y="1" width="14" height="14" rx="3" fill="#0e1d2a" stroke="#2f8fcb" /><path d="M6.200 12V4.500h1.800a2.200 2.200 0 0 1 0 4.500H6.500" stroke="#52b4ec" strokeWidth={1.400} /></Glyph> },
  { name: "Pen tool", state: "open", icon: <Glyph s={15}><path d="M0 1h16v14H0z" fill="#f3f3f3" stroke="none" /><path d="m5 12 6-8" stroke="#333" /></Glyph> },
  { name: "OpenTabletDriver", state: "open", icon: <Glyph s={16}><path d="M2 0h11l2 2v14H2z" fill="#e9eef2" stroke="none" /><path d="m10 1-2.500 7" stroke="#3d4a55" strokeWidth={1.800} /><path d="M2 10c4-1.500 8 0 13 2M4 13c4-1 6-3 11-4" stroke="#2f7fc0" strokeWidth={1.600} /></Glyph> },
  { name: "Xournal++", state: "current", icon: <JournalMark s={16} /> },
];

const tray: { name: string; icon: React.ReactNode }[] = [
  { name: "Do not disturb", icon: <Glyph s={12}><path d="M3 12h10l-1.500-2V6.500a3.500 3.500 0 0 0-7 0V10zM7 14h2" /><path d="m2 2 12 12" stroke="#c44a5c" /></Glyph> },
  { name: "Keyboard layout", icon: <Lang>EN</Lang> },
  { name: "OBS", icon: <><SiObsstudio size={14} color="#e4e5e6" /><RecordDot /></> },
  { name: "Recording", icon: <Glyph s={11}><circle cx="8" cy="8" r="7.500" fill="#d63a55" stroke="none" /></Glyph> },
  { name: "Clipboard", icon: <Glyph s={11}><path d="M2 3h12v12H2zM5 1h6v3H5zM5 7.500h6M5 11h4" strokeWidth={1.600} /></Glyph> },
  { name: "Media", icon: <Glyph s={12}><circle cx="8" cy="8" r="6.500" /><path d="M6.500 5v6L11 8z" fill="#dcdddf" /></Glyph> },
  { name: "Volume", icon: <Glyph s={12}><path d="M2 6h2.500L9 2v12l-4.500-4H2z" fill="#eee" stroke="none" /><path d="M11 5q2.500 3 0 6" /></Glyph> },
  { name: "Night colour", icon: <Glyph s={12}><path d="M7 2a6 6 0 1 0 5 10M7 2c-1 3 1 6 1 11M8 2h5v4a4 4 0 0 1-4 4" /></Glyph> },
  { name: "Display", icon: <Glyph s={12}><path d="M1 3h14v11H1z" /><circle cx="7" cy="8.500" r="2.500" /><path d="M11 5.500h2" strokeWidth={1.800} /></Glyph> },
  { name: "Microphone", icon: <Glyph s={12}><rect x="5.500" y="1" width="5" height="9" rx="2.500" fill="#eee" stroke="none" /><path d="M3 7c0 6 10 6 10 0M8 12v3M1 4v4M15 4v4" /></Glyph> },
  { name: "Screens", icon: <Glyph s={12}><path d="M3 2h11v9H3zM2 5v9h8M7 11v3" strokeWidth={1.600} /></Glyph> },
  { name: "Power profile", icon: <Glyph s={12}><path d="M2 14C3 5 7 2 15 2c0 7-4 11-10 10M4 11l7-5" /></Glyph> },
];

const Taskbar = () => (
  <Panel>
    {apps.map((a) => <Task key={a.name} aria-label={a.name} $state={a.state}>{a.icon}</Task>)}
    <Filler />
    {tray.map((t) => <TrayButton key={t.name} aria-label={t.name}>{t.icon}</TrayButton>)}
    <TrayButton $w={14} aria-label="Show hidden icons"><ChevronUp /></TrayButton>
    <TrayButton $w={19} as="div"><Dial $c="#d2324c">48°C</Dial></TrayButton>
    <TrayButton $w={19} as="div"><Dial $c="#8ccc3a">42°C</Dial></TrayButton>
    <Clock><Hour>6:07 PM</Hour><span>12/29/25</span></Clock>
    <TrayButton aria-label="Show desktop"><Glyph s={12}><path d="M2 2h12v11H2zM2 14.500h12" strokeWidth={1.400} /></Glyph></TrayButton>
  </Panel>
);

export default function App() {
  return (
    <>
      <Global />
      <Desktop>
        <Workspace>
          <LeftHalf>
            <BrowserWindow />
            <TabletDriver />
            <Pomatez />
          </LeftHalf>
          <JournalWindow />
        </Workspace>
        <Taskbar />
        <Preferences />
      </Desktop>
    </>
  );
}
